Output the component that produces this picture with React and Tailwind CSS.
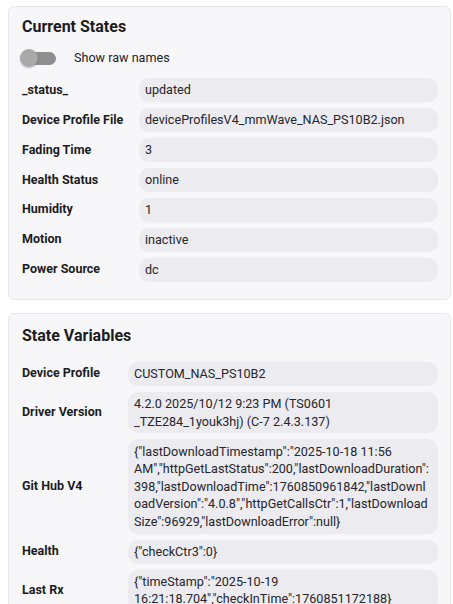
import React, { useState } from "react";

const currentStates = [
  ["_status_", "updated"],
  ["Device Profile File", "deviceProfilesV4_mmWave_NAS_PS10B2.json"],
  ["Fading Time", "3"],
  ["Health Status", "online"],
  ["Humidity", "1"],
  ["Motion", "inactive"],
  ["Power Source", "dc"],
];

const stateVariables = [
  ["Device Profile", "CUSTOM_NAS_PS10B2"],
  ["Driver Version", "4.2.0 2025/10/12 9:23 PM (TS0601 _TZE284_1youk3hj) (C-7 2.4.3.137)"],
  [
    "Git Hub V4",
    '{"lastDownloadTimestamp":"2025-10-18 11:56 AM","httpGetLastStatus":200,"lastDownloadDuration":398,"lastDownloadTime":1760850961842,"lastDownloadVersion":"4.0.8","httpGetCallsCtr":1,"lastDownloadSize":96929,"lastDownloadError":null}',
  ],
  ["Health", '{"checkCtr3":0}'],
  ["Last Rx", '{"timeStamp":"2025-10-19 16:21:18.704","checkInTime":1760851172188}'],
];

const Row = ({ label, value }) => (
  <>
    <div className="flex items-center whitespace-nowrap text-[12.5px] font-bold text-[#1c1c20]">{label}</div>
    <div className="min-w-0 bg-[#ebebf0] rounded-[10px] px-[6px] py-[3.2px] text-[12.6px] leading-[17.6px] text-[#26262b] [overflow-wrap:anywhere]">
      {value}
    </div>
  </>
);

const Card = ({ title, top = "pt-[8px]", children }) => (
  <div className={`bg-[#f7f7fa] border border-[#e8e8ec] rounded-md pb-[17px] pl-[13px] pr-[12px] ${top}`}>
    <h2 className="text-[16px] leading-6 font-bold text-[#1c1c20]">{title}</h2>
    {children}
  </div>
);

export default function App() {
  const [raw, setRaw] = useState(false);

  return (
    <div className="bg-white min-h-screen pl-2 pr-[2px] pt-[6px] flex flex-col gap-[13px]" style={{ fontFamily: "Roboto, 'Liberation Sans', sans-serif" }}>
      <Card title="Current States">
        <div className="flex items-center mt-[9px] mb-[10px] h-5">
          <button onClick={() => setRaw(!raw)} className="relative w-[38px] h-5 shrink-0 ml-[-2px]">
            <span className="absolute left-[4px] right-[2px] top-[3.5px] h-[13px] rounded-full bg-[#8f8f8f]" />
            <span className="absolute left-0 top-[1px] w-[18px] h-[18px] rounded-full bg-[#a9a9a9] shadow-[0_1px_2px_rgba(0,0,0,0.25)]" />
          </button>
          <span className="ml-[16px] text-[12.6px] text-[#222226]">Show raw names</span>
        </div>
        <div className="grid grid-cols-[99px_minmax(0,1fr)] gap-x-[18px] gap-y-[6px]">
          {currentStates.map(([l, v]) => (
            <Row key={l} label={l} value={v} />
          ))}
        </div>
      </Card>

      <Card title="State Variables" top="pt-[10px]">
        <div className="grid grid-cols-[88px_minmax(0,1fr)] gap-x-[18px] gap-y-[6px] mt-[14px]">
          {stateVariables.map(([l, v]) => (
            <Row key={l} label={l} value={v} />
          ))}
        </div>
      </Card>
    </div>
  );
}
